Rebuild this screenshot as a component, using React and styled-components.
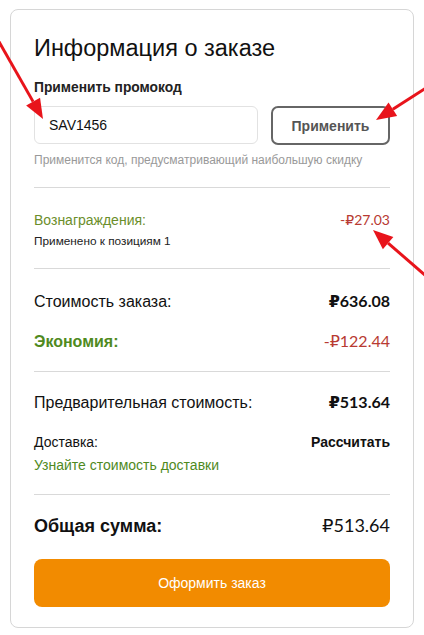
import React from "react";
import styled, { createGlobalStyle } from "styled-components";

const GlobalStyle = createGlobalStyle`
  body {
    margin: 0;
    background: #fff;
    font-family: "Liberation Sans", Arial, sans-serif;
    color: #111;
  }
`;

const Page = styled.div`
  position: relative;
  width: 424px;
  height: 635px;
  padding: 9px 10px;
  box-sizing: border-box;
  overflow: hidden;
`;

const Card = styled.div`
  box-sizing: border-box;
  width: 404px;
  border: 1px solid #d6d6d6;
  border-radius: 8px;
  padding: 24px 23px 20px 23px;
  display: flex;
  flex-direction: column;
`;

const Title = styled.h2`
  margin: 0;
  font-size: 23.5px;
  font-weight: 400;
  line-height: 28px;
  color: #111;
`;

const Label = styled.div`
  margin-top: 18px;
  font-size: 13.8px;
  font-weight: 700;
  color: #222;
`;

const PromoRow = styled.div`
  display: grid;
  grid-template-columns: 1fr 119px;
  gap: 13px;
  margin-top: 11px;
`;

const Input = styled.div`
  height: 38px;
  box-sizing: border-box;
  border: 1px solid #e2e2e2;
  border-radius: 6px;
  padding: 0 14px;
  display: flex;
  align-items: center;
  font-size: 14px;
  color: #111;
`;

const ApplyButton = styled.button`
  height: 39px;
  box-sizing: border-box;
  border: 2px solid #666;
  border-radius: 7px;
  background: #fff;
  font-family: "Liberation Sans", Arial, sans-serif;
  font-size: 14px;
  font-weight: 700;
  color: #555;
`;

const Hint = styled.div`
  margin-top: 8px;
  font-size: 12px;
  color: #999;
`;

const Divider = styled.div`
  height: 1px;
  background: #d9d9d9;
  margin: ${(p) => p.$m || "20px 0"};
`;

const Row = styled.div`
  display: flex;
  justify-content: space-between;
  align-items: baseline;
  margin-top: ${(p) => p.$top || 0}px;
  font-size: ${(p) => p.$size || 16}px;
  font-weight: ${(p) => (p.$bold ? 700 : 400)};
  color: ${(p) => p.$color || "#111"};
`;

const Price = styled.span`
  font-family: "Lato", "DejaVu Sans", sans-serif;
  font-weight: ${(p) => (p.$bold ? 700 : 400)};
  color: ${(p) => p.$color || "#111"};
`;

const Small = styled.div`
  margin-top: ${(p) => p.$top || 4}px;
  font-size: ${(p) => p.$size || 11}px;
  color: ${(p) => p.$color || "#222"};
`;

const Checkout = styled.button`
  margin-top: 22px;
  height: 48px;
  border: none;
  border-radius: 8px;
  background: #f28b00;
  color: #fff;
  font-family: "Liberation Sans", Arial, sans-serif;
  font-size: 14px;
`;

const Arrows = styled.svg`
  position: absolute;
  left: 0;
  top: 0;
  pointer-events: none;
`;

const red = "#b83a32";
const green = "#4f8a1e";

const Arrow = ({ x1, y1, x2, y2 }) => {
  const a = Math.atan2(y2 - y1, x2 - x1);
  const len = 20;
  const w = 8;
  const bx = x2 - len * Math.cos(a);
  const by = y2 - len * Math.sin(a);
  const px = -Math.sin(a) * w;
  const py = Math.cos(a) * w;
  return (
    <g fill="#e8141b" stroke="#e8141b">
      <line x1={x1} y1={y1} x2={bx} y2={by} strokeWidth="3" />
      <polygon
        stroke="none"
        points={`${x2},${y2} ${bx + px},${by + py} ${bx - px},${by - py}`}
      />
    </g>
  );
};

export default function App() {
  return (
    <>
      <GlobalStyle />
      <Page>
        <Card>
          <Title>Информация о заказе</Title>
          <Label>Применить промокод</Label>
          <PromoRow>
            <Input>SAV1456</Input>
            <ApplyButton>Применить</ApplyButton>
          </PromoRow>
          <Hint>Применится код, предусматривающий наибольшую скидку</Hint>
          <Divider $m="20px 0 23px" />
          <Row $size={14} $color="#6b8e2a">
            <span>Вознаграждения:</span>
            <Price $color={red}>-₽27.03</Price>
          </Row>
          <Small $top={6} $size={11.8}>Применено к позициям 1</Small>
          <Divider $m="20px 0 22px" />
          <Row>
            <span>Стоимость заказа:</span>
            <Price $bold>₽636.08</Price>
          </Row>
          <Row $top={20} $bold $color={green}>
            <span>Экономия:</span>
            <Price $color={red}>-₽122.44</Price>
          </Row>
          <Divider $m="20px 0 20px" />
          <Row>
            <span>Предварительная стоимость:</span>
            <Price $bold>₽513.64</Price>
          </Row>
          <Row $top={22} $size={14}>
            <span>Доставка:</span>
            <b>Рассчитать</b>
          </Row>
          <Small $top={7} $size={14} $color={green}>
            Узнайте стоимость доставки
          </Small>
          <Divider $m="21px 0 19px" />
          <Row $size={18}>
            <b>Общая сумма:</b>
            <Price>₽513.64</Price>
          </Row>
          <Checkout>Оформить заказ</Checkout>
        </Card>
        <Arrows width="424" height="635">
          <Arrow x1={-2} y1={40} x2={43} y2={119} />
          <Arrow x1={426} y1={88} x2={376} y2={120} />
          <Arrow x1={426} y1={276} x2={373} y2={230} />
        </Arrows>
      </Page>
    </>
  );
}
